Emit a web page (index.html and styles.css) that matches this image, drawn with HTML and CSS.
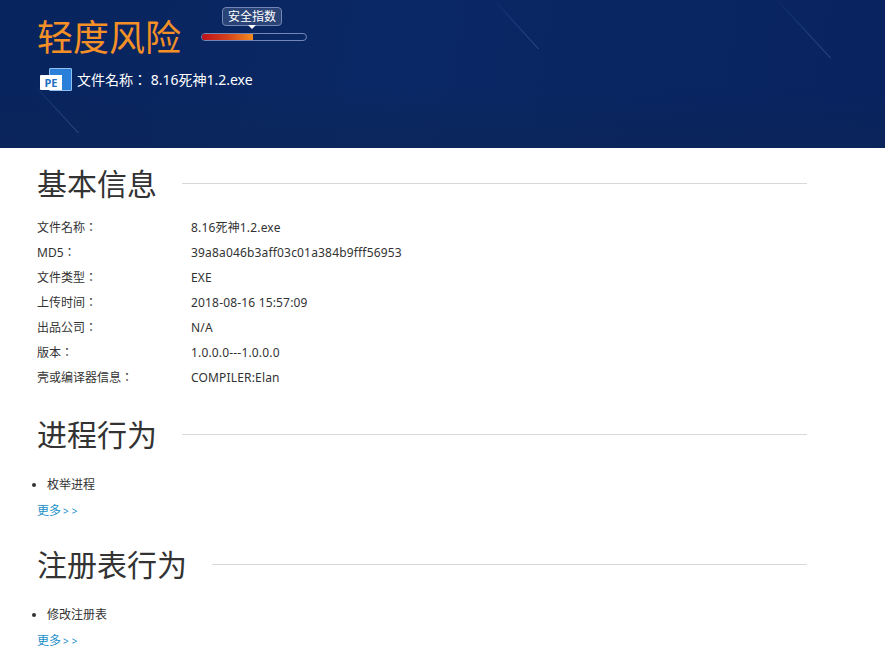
FILE: index.html
```html
<!DOCTYPE html>
<html>
<head>
<meta http-equiv="Content-Type" content="text/html; charset=utf-8" />
<title>文件分析报告</title>
<link rel="stylesheet" href="styles.css">
</head>
<body>

<div class="banner">
  <svg class="streaks" width="885" height="148" viewBox="0 0 885 148">
    <defs>
      <linearGradient id="fade" x1="0" y1="0" x2="1" y2="1">
        <stop offset="0" stop-color="#5f83c4" stop-opacity="0"/>
        <stop offset="1" stop-color="#5f83c4" stop-opacity=".45"/>
      </linearGradient>
    </defs>
    <polygon points="493,0 495,0 539,49 538,49" fill="url(#fade)"/>
    <polygon points="776,0 778,0 831,58 830,58" fill="url(#fade)"/>
    <polygon points="32,84 34,84 79,133 78,133" fill="url(#fade)"/>
  </svg>

  <div class="levelrow">
    <h1 class="level">轻度风险</h1>
    <div class="gauge">
      <span class="gaugetip">安全指数</span>
      <div class="gaugebar"><div class="gaugefill"></div></div>
    </div>
  </div>

  <div class="fileline">
    <span class="peicon"><i class="peback"></i><b class="pefront">PE</b></span>
    <span>文件名称： 8.16死神1.2.exe</span>
  </div>
</div>

<div class="content">

  <div class="sect">
    <h2>基本信息</h2>
    <table class="info">
      <tr><td class="key">文件名称：</td><td>8.16死神1.2.exe</td></tr>
      <tr><td class="key">MD5：</td><td>39a8a046b3aff03c01a384b9fff56953</td></tr>
      <tr><td class="key">文件类型：</td><td>EXE</td></tr>
      <tr><td class="key">上传时间：</td><td>2018-08-16 15:57:09</td></tr>
      <tr><td class="key">出品公司：</td><td>N/A</td></tr>
      <tr><td class="key">版本：</td><td>1.0.0.0---1.0.0.0</td></tr>
      <tr><td class="key">壳或编译器信息：</td><td>COMPILER:Elan</td></tr>
    </table>
  </div>

  <div class="sect">
    <h2>进程行为</h2>
    <ul class="acts"><li>枚举进程</li></ul>
    <a class="more" href="#">更多<small>&gt;&gt;</small></a>
  </div>

  <div class="sect">
    <h2>注册表行为</h2>
    <ul class="acts"><li>修改注册表</li></ul>
    <a class="more" href="#">更多<small>&gt;&gt;</small></a>
  </div>

</div>

</body>
</html>
```

FILE: styles.css
```css
html, body { margin:0; padding:0; height:656px; overflow:hidden; background:#fff; }
body { font-family:"Noto Sans","Noto Sans CJK SC",sans-serif; font-size:12px; color:#333; }

.banner { position:relative; height:148px; box-sizing:border-box; padding:10px 0 0 37px; color:#fff; overflow:hidden;
  background:linear-gradient(180deg, rgba(8,36,88,0) 60%, rgba(12,38,88,.7) 100%), linear-gradient(100deg, #08245e 0%, #0a2865 45%, #082360 100%); }
.streaks { position:absolute; left:0; top:0; }

.levelrow { position:relative; display:flex; align-items:flex-start; }
h1.level { margin:0; font-size:36px; line-height:56px; font-weight:400; color:#f59027; }
.gauge { position:relative; margin:23px 0 0 20px; width:106px; }
.gaugebar { border:1px solid #7187b5; border-radius:5px; width:104px; height:6px; overflow:hidden; }
.gaugefill { width:51px; height:6px; background:linear-gradient(90deg, #c1121a 0%, #d4411a 50%, #f28c1f 100%); }
.gaugetip { position:absolute; left:21px; top:-26px; width:58px; height:17px; line-height:17px; text-align:center;
  border:1px solid #7187b5; border-radius:4px; background:#2a4478; color:#fff; font-size:12px; }
.gaugetip:after { content:""; position:absolute; left:25px; top:17px; border:4px solid transparent; border-top-color:#fff; border-bottom:0; }

.fileline { position:relative; display:flex; align-items:center; margin-top:1px; font-family:"Noto Sans","Noto Sans CJK JP",sans-serif; font-size:14px; height:24px; white-space:pre; }
.peicon { position:relative; display:block; width:32px; height:24px; margin:1px 5px 0 3px; flex:none; }
.peback { position:absolute; left:9px; top:0; width:21px; height:21px; background:#2a7fd8; border:1px solid #8fc0ef; border-radius:1px; }
.pefront { position:absolute; left:0; top:7px; width:22px; height:15px; background:#fff; border-radius:1px 0 0 1px; color:#1f6fc4;
  font-size:11px; line-height:15px; font-weight:700; text-align:center; }

.content { padding:0 78px 0 37px; }
.sect h2 { display:flex; align-items:center; margin:0; height:40px; font-size:30px; line-height:40px; font-weight:400; color:#333; }
.sect h2:after { content:""; flex:1; height:1px; background:#d8d8d8; margin:0 0 2px 25px; }
.sect { margin-bottom:21px; }
.sect:first-child { padding-top:16px; margin-bottom:25px; }

table.info { border-collapse:collapse; margin-top:11px; }
table.info td { padding:0; height:25px; line-height:25px; white-space:nowrap; letter-spacing:.17px; }
table.info td.key { width:154px; letter-spacing:0; font-family:"Noto Sans","Noto Sans CJK JP",sans-serif; }

ul.acts { margin:17px 0 0; padding:0 0 0 10px; list-style:disc outside none; }
ul.acts li { line-height:26px; }
a.more { display:block; line-height:26px; color:#1a8fc9; text-decoration:none; }
a.more small { font-size:10px; letter-spacing:3px; margin-left:2px; }
```
